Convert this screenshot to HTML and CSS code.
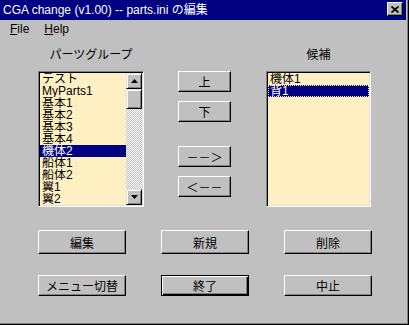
FILE: index.html
```html
<!DOCTYPE html>
<html lang="ja">
<head>
  <meta charset="UTF-8">
  <title>CGA change (v1.00) -- parts.ini の編集</title>
  <link rel="stylesheet" href="styles.css">
</head>
<body>
  <div class="window">
    <!-- Title bar -->
    <div class="titlebar">
      <span class="title">CGA change (v1.00) -- parts.ini の編集</span>
      <button class="close-btn" aria-label="close">
        <svg width="8" height="7" viewBox="0 0 8 7"><path d="M0.5 0.5 L7.5 6.5 M7.5 0.5 L0.5 6.5" stroke="#000" stroke-width="1.7" fill="none"/></svg>
      </button>
    </div>

    <!-- Menu -->
    <div class="menubar">
      <span class="menu-item"><u>F</u>ile</span>
      <span class="menu-item"><u>H</u>elp</span>
    </div>

    <div class="client">
      <div class="panes">
        <!-- Parts groups -->
        <div class="pane pane-left">
          <div class="pane-label">パーツグループ</div>
          <div class="listbox">
            <ul class="items">
              <li>テスト</li>
              <li>MyParts1</li>
              <li>基本1</li>
              <li>基本2</li>
              <li>基本3</li>
              <li>基本4</li>
              <li class="selected">機体2</li>
              <li>船体1</li>
              <li>船体2</li>
              <li>翼1</li>
              <li>翼2</li>
            </ul>
            <div class="scrollbar">
              <div class="sb-btn">
                <svg width="7" height="4" viewBox="0 0 7 4"><polygon points="3.5,0 7,4 0,4" fill="#000"/></svg>
              </div>
              <div class="sb-thumb"></div>
              <div class="sb-track"></div>
              <div class="sb-btn">
                <svg width="7" height="4" viewBox="0 0 7 4"><polygon points="0,0 7,0 3.5,4" fill="#000"/></svg>
              </div>
            </div>
          </div>
        </div>

        <!-- Move buttons -->
        <div class="movers">
          <button class="btn btn-small">上</button>
          <button class="btn btn-small">下</button>
          <button class="btn btn-small btn-gap">－－＞</button>
          <button class="btn btn-small">＜－－</button>
        </div>

        <!-- Candidates -->
        <div class="pane pane-right">
          <div class="pane-label">候補</div>
          <div class="listbox">
            <ul class="items">
              <li>機体1</li>
              <li class="selected focused">背1</li>
            </ul>
          </div>
        </div>
      </div>

      <div class="actions">
        <div class="action-row row-1">
          <button class="btn">編集</button>
          <button class="btn">新規</button>
          <button class="btn">削除</button>
        </div>
        <div class="action-row row-2">
          <button class="btn">メニュー切替</button>
          <button class="btn btn-default">終了</button>
          <button class="btn">中止</button>
        </div>
      </div>
    </div>
  </div>
</body>
</html>
```

FILE: styles.css
```css
body {
  margin: 0;
  background: #c0c0c0;
  font-family: "Liberation Sans", "Noto Sans CJK JP", sans-serif;
  font-size: 12px;
  color: #000;
}
.window {
  width: 409px;
  height: 325px;
  box-sizing: border-box;
  background: #c0c0c0;
  border-right: 1px solid #000;
  border-bottom: 1px solid #000;
  box-shadow: inset -1px -1px #808080;
  padding-right: 2px;
  padding-bottom: 2px;
}
.titlebar {
  height: 20px;
  background: #000080;
  color: #fff;
  display: flex;
  align-items: center;
  justify-content: space-between;
  padding: 0 3px 0 3px;
}
.title {
  font-size: 12px;
  line-height: 20px;
  white-space: nowrap;
}
.close-btn {
  width: 16px;
  height: 14px;
  padding: 0;
  margin-top: -2px;
  background: #c0c0c0;
  border: 1px solid;
  border-color: #fff #000 #000 #fff;
  box-shadow: inset -1px -1px #808080;
  display: flex;
  align-items: center;
  justify-content: center;
}
.menubar {
  height: 18px;
  display: flex;
  align-items: center;
  padding-left: 10px;
  gap: 15px;
}
.menu-item {
  line-height: 16px;
}
.client {
  padding-left: 38px;
}
.panes {
  display: flex;
  margin-top: 9px;
}
.pane-left {
  width: 106px;
}
.pane-right {
  width: 105px;
  margin-left: 35px;
}
.pane-label {
  height: 16px;
  line-height: 16px;
  text-align: center;
  margin-bottom: 8px;
  white-space: nowrap;
}
.listbox {
  height: 136px;
  box-sizing: border-box;
  background: #fff0c4;
  border: 1px solid;
  border-color: #808080 #fff #fff #808080;
  box-shadow: inset 1px 1px #000, inset -1px -1px #dfdfdf;
  padding: 1px;
  display: flex;
}
.items {
  list-style: none;
  margin: 0;
  padding: 0;
  flex: 1;
  overflow: hidden;
}
.items li {
  height: 12px;
  line-height: 12px;
  padding-left: 2px;
  white-space: nowrap;
  overflow: hidden;
}
.items li.selected {
  background: #000080;
  color: #fff;
}
.items li.focused {
  outline: 1px dotted #fff0c4;
  outline-offset: -1px;
}
.scrollbar {
  width: 16px;
  display: flex;
  flex-direction: column;
}
.sb-btn, .sb-thumb {
  box-sizing: border-box;
  background: #c0c0c0;
  border: 1px solid;
  border-color: #dfdfdf #000 #000 #dfdfdf;
  box-shadow: inset 1px 1px #fff, inset -1px -1px #808080;
}
.sb-btn {
  height: 16px;
  display: flex;
  align-items: center;
  justify-content: center;
}
.sb-thumb {
  height: 20px;
}
.sb-track {
  flex: 1;
  background-image: conic-gradient(#fff 25%, #c0c0c0 0 50%, #fff 0 75%, #c0c0c0 0);
  background-size: 2px 2px;
}
.movers {
  display: flex;
  flex-direction: column;
  margin-left: 34px;
  margin-top: 24px;
  gap: 9px;
}
.btn {
  width: 88px;
  height: 24px;
  padding: 0;
  box-sizing: border-box;
  font: inherit;
  color: #000;
  background: #c0c0c0;
  border: 1px solid;
  border-color: #fff #000 #000 #fff;
  box-shadow: inset -1px -1px #808080;
  white-space: nowrap;
}
.btn-small {
  width: 53px;
  height: 21px;
}
.btn-gap {
  margin-top: 15px;
}
.btn-default {
  border-color: #000;
  box-shadow: inset 1px 1px #fff, inset -1px -1px #000, inset -2px -2px #808080;
}
.actions {
  margin-top: 23px;
}
.action-row {
  display: flex;
  gap: 35px;
}
.row-2 {
  margin-top: 21px;
}
.row-2 .btn {
  height: 21px;
}
```
